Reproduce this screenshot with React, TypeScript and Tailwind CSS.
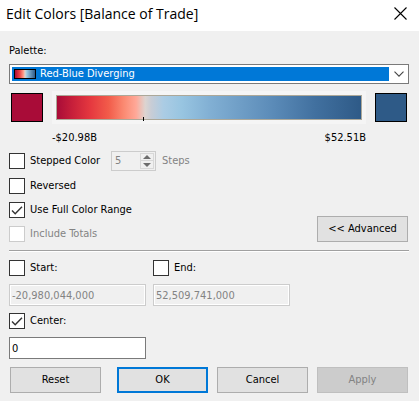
import { useState } from "react";
import type { ReactNode } from "react";

type CheckProps = {
  id: string;
  label: string;
  defaultChecked?: boolean;
  disabled?: boolean;
};

function Check({ id, label, defaultChecked = false, disabled = false }: CheckProps) {
  return (
    <div className="flex h-4 items-center gap-[5px]">
      <span className="relative block size-4 shrink-0">
        <input
          id={id}
          type="checkbox"
          defaultChecked={defaultChecked}
          disabled={disabled}
          className="peer block size-4 appearance-none border border-[#333333] bg-white disabled:border-[#cccccc]"
        />
        <svg
          viewBox="0 0 16 16"
          aria-hidden="true"
          className="pointer-events-none absolute inset-0 hidden size-4 peer-checked:block"
        >
          <path d="M3 8.5 6.2 11.7 13 4.7" fill="none" stroke="#333333" strokeWidth="1.4" />
        </svg>
      </span>
      <label htmlFor={id} className={disabled ? "whitespace-nowrap text-[#838383]" : "whitespace-nowrap"}>
        {label}
      </label>
    </div>
  );
}

type ButtonProps = { children: ReactNode; primary?: boolean; disabled?: boolean };

function DialogButton({ children, primary = false, disabled = false }: ButtonProps) {
  return (
    <button
      type="button"
      disabled={disabled}
      className={
        primary
          ? "h-[26px] w-[91px] border-2 border-[#0078d7] bg-[#e1e1e1]"
          : "h-[26px] w-[91px] border border-[#adadad] bg-[#e1e1e1] disabled:border-[#bfbfbf] disabled:bg-[#cccccc] disabled:text-[#838383]"
      }
    >
      {children}
    </button>
  );
}

const fieldStyle =
  "h-[22px] w-[137px] border border-[#7a7a7a] bg-white px-0.5 outline-none disabled:border-[#cccccc] disabled:bg-[#f0f0f0] disabled:text-[#838383] disabled:shadow-[inset_0_0_0_1px_#ffffff]";

export default function App() {
  const [steps, setSteps] = useState(5);

  return (
    <div className="min-h-screen bg-[#f0f0f0] font-['DejaVu_Sans_Condensed','Noto_Sans',sans-serif] text-[11px] leading-4 text-black">
      <header className="flex h-[31px] items-center justify-between bg-white pr-3 pb-1 pl-1.5">
        <h1 className="font-['Open_Sans','Noto_Sans',sans-serif] text-sm leading-6">Edit Colors [Balance of Trade]</h1>
        <button type="button" aria-label="Close" className="size-[13px]">
          <svg viewBox="0 0 13 13" className="size-[13px]">
            <path d="M.5.5l12 12M12.500.5l-12 12" stroke="#000000" strokeWidth="1.1" />
          </svg>
        </button>
      </header>

      <main className="pt-3 pr-2.5 pl-[9px]">
        <label htmlFor="palette" className="block h-[21px]">
          Palette:
        </label>
        <div className="relative flex h-5 items-center border border-[#7a7a7a] bg-white p-0.5">
          <select
            id="palette"
            className="h-3.5 min-w-0 flex-1 appearance-none bg-[#0078d7] pl-7 leading-[14px] text-white outline-none"
          >
            <option>Red-Blue Diverging</option>
          </select>
          <span className="pointer-events-none absolute left-1 h-2.5 w-[22px] border border-black bg-[linear-gradient(90deg,#a90c38_0%,#e93e40_22%,#ffa290_43%,#dcd4d0_50%,#98c5e1_60%,#2e5a87_100%)]" />
          <svg viewBox="0 0 10 6" aria-hidden="true" className="pointer-events-none mr-0.5 ml-[5px] h-1.5 w-2.5">
            <path d="M.5.700 5 5.200 9.500.7" fill="none" stroke="#444444" strokeWidth="1.1" />
          </svg>
        </div>

        <div className="mt-[7px] flex h-[33px] items-center px-0.5">
          <button type="button" aria-label="Start color" className="h-[29px] w-8 shrink-0 border border-black bg-[#a90c38]" />
          <div className="relative mx-[9px] h-[33px] min-w-0 flex-1 bg-[#f5f5f5] p-1">
            <div className="h-[25px] border border-[#aca899] bg-[linear-gradient(90deg,#a90c38_0%,#c71f3a_5%,#e5383f_11%,#f25c4a_17%,#fb8a72_22%,#ffa898_26%,#ddd4d0_29%,#c8cdd6_31%,#abcce4_35%,#98c5e1_41%,#82b0d4_50%,#5b8bb8_71%,#41709f_85%,#2e5a87_100%)]" />
            <span className="absolute bottom-[3px] left-[29%] h-1 w-px bg-black" />
          </div>
          <button type="button" aria-label="End color" className="h-[29px] w-8 shrink-0 border border-black bg-[#2e5a87]" />
        </div>

        <div className="mt-1.5 flex justify-between px-[43px]">
          <span>-$20.98B</span>
          <span>$52.51B</span>
        </div>

        <div className="mt-[5px] flex h-5 items-center">
          <div className="w-[102px]">
            <Check id="stepped" label="Stepped Color" />
          </div>
          <div className="flex h-5 w-[45px] items-center justify-between border border-[#cccccc] p-px">
            <input
              id="steps"
              type="text"
              value={steps}
              disabled
              onChange={(event) => setSteps(Number(event.target.value))}
              className="h-4 w-6 bg-transparent pl-0.5 text-[#838383]"
            />
            <div className="flex h-4 w-3.5 flex-col border border-[#d8d8d8]">
              <button
                type="button"
                disabled
                aria-label="Increase steps"
                onClick={() => setSteps(steps + 1)}
                className="flex h-[7px] items-center justify-center border-b border-[#d8d8d8]"
              >
                <svg viewBox="0 0 8 4" className="h-1 w-2">
                  <path d="M0 4 4 0l4 4z" fill="#6d6d6d" />
                </svg>
              </button>
              <button
                type="button"
                disabled
                aria-label="Decrease steps"
                onClick={() => setSteps(steps - 1)}
                className="flex h-[7px] items-center justify-center"
              >
                <svg viewBox="0 0 8 4" className="h-1 w-2">
                  <path d="M0 0 4 4l4-4z" fill="#6d6d6d" />
                </svg>
              </button>
            </div>
          </div>
          <label htmlFor="steps" className="ml-1.5 text-[#838383]">
            Steps
          </label>
        </div>

        <div className="mt-[7px] flex items-end justify-between pr-px">
          <div className="flex flex-col gap-2">
            <Check id="reversed" label="Reversed" />
            <Check id="full-range" label="Use Full Color Range" defaultChecked />
            <Check id="totals" label="Include Totals" disabled />
          </div>
          <DialogButton>&lt;&lt; Advanced</DialogButton>
        </div>

        <hr className="mt-2 h-0.5 border-t border-b border-t-[#a0a0a0] border-b-white" />

        <div className="mt-2 flex gap-[7px]">
          <div className="flex flex-col gap-2">
            <Check id="start" label="Start:" />
            <input type="text" aria-label="Start value" disabled defaultValue="-20,980,044,000" className={fieldStyle} />
          </div>
          <div className="flex flex-col gap-2">
            <Check id="end" label="End:" />
            <input type="text" aria-label="End value" disabled defaultValue="52,509,741,000" className={fieldStyle} />
          </div>
        </div>
        <div className="mt-[7px] flex flex-col gap-2">
          <Check id="center" label="Center:" defaultChecked />
          <input type="text" aria-label="Center value" defaultValue="0" className={fieldStyle} />
        </div>

        <footer className="mt-2 flex justify-between px-px pb-2">
          <DialogButton>Reset</DialogButton>
          <div className="flex gap-[9px]">
            <DialogButton primary>OK</DialogButton>
            <DialogButton>Cancel</DialogButton>
            <DialogButton disabled>Apply</DialogButton>
          </div>
        </footer>
      </main>
    </div>
  );
}
